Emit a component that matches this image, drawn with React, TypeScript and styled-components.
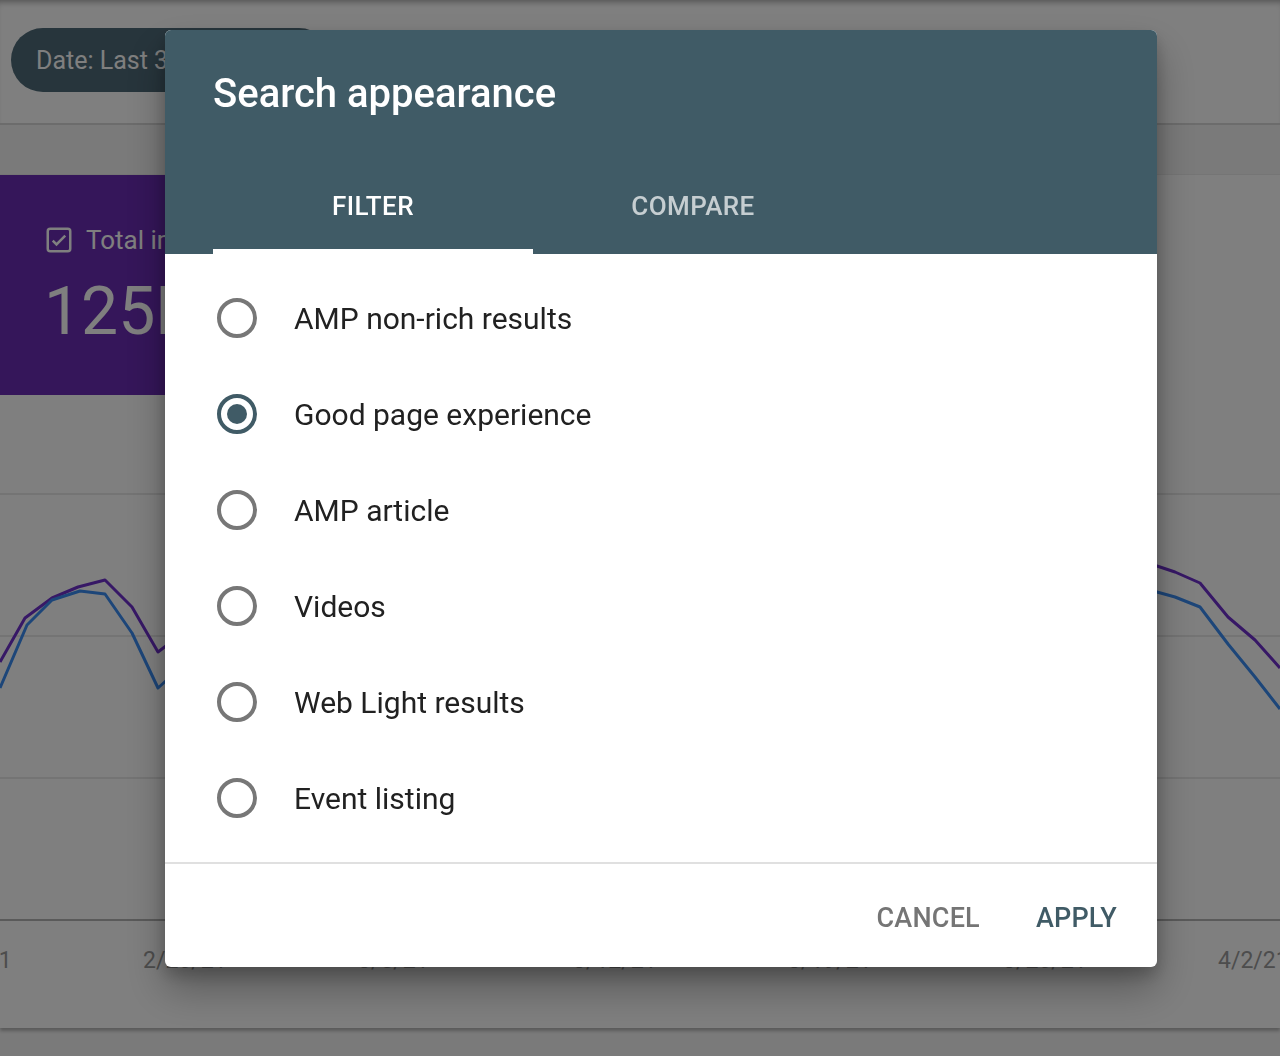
import React from "react";
import styled, { createGlobalStyle } from "styled-components";

const GlobalStyle = createGlobalStyle`
  html, body {
    margin: 0;
    padding: 0;
    background: #ffffff;
    font-family: Roboto, "Noto Sans", "Liberation Sans", sans-serif;
    overflow: hidden;
  }
  * { box-sizing: border-box; }
`;

const options = [
  "AMP non-rich results",
  "Good page experience",
  "AMP article",
  "Videos",
  "Web Light results",
  "Event listing",
];

const xLabels = ["2/19/21", "2/26/21", "3/5/21", "3/12/21", "3/19/21", "3/26/21", "4/2/21"];

// chart points use page y coordinates (viewBox starts where the chart area starts)
const purpleLine =
  "0,662 25,618 52,598 78,587 105,580 132,607 158,652 200,620 260,600 320,640 380,610 440,590 500,630 560,600 620,585 680,615 740,600 800,580 860,610 920,590 980,575 1040,600 1100,580 1157,566 1175,572 1200,583 1228,617 1255,640 1280,668";
const blueLine =
  "0,688 27,625 52,600 80,591 105,594 132,633 158,688 200,650 260,625 320,665 380,640 440,620 500,655 560,630 620,612 680,640 740,628 800,606 860,636 920,615 980,600 1040,626 1100,606 1157,592 1175,597 1200,607 1228,644 1255,677 1280,709";

export default function App() {
  const [selected, setSelected] = React.useState(1);

  return (
    <>
      <GlobalStyle />
      <Page>
        <TopBar>
          <DateChip>Date: Last 3 months</DateChip>
        </TopBar>
        <Spacer />
        <ChartCard>
          <MetricTile>
            <MetricLabel>
              <CheckIcon viewBox="0 0 24 24">
                <rect x="3" y="3" width="18" height="18" rx="2" fill="none" stroke="currentColor" strokeWidth="2" />
                <path d="M7 12.5l3 3 7-7" fill="none" stroke="currentColor" strokeWidth="2" />
              </CheckIcon>
              Total impressions
            </MetricLabel>
            <MetricValue>125M</MetricValue>
          </MetricTile>
          <ChartArea>
            <GridLine />
            <GridLine />
            <GridLine />
            <AxisLine />
            <LinesSvg viewBox="0 395 1280 526" preserveAspectRatio="none">
              <polyline points={purpleLine} fill="none" stroke="#6e30cc" strokeWidth="3" strokeLinejoin="round" />
              <polyline points={blueLine} fill="none" stroke="#3a8cf2" strokeWidth="3" strokeLinejoin="round" />
            </LinesSvg>
          </ChartArea>
          <AxisLabels>
            {xLabels.map((l) => (
              <AxisLabel key={l}>{l}</AxisLabel>
            ))}
          </AxisLabels>
        </ChartCard>
      </Page>

      <Scrim />

      <Dialog role="dialog" aria-label="Search appearance">
        <DialogHeader>
          <DialogTitle>Search appearance</DialogTitle>
          <Tabs>
            <Tab $active>FILTER</Tab>
            <Tab>COMPARE</Tab>
          </Tabs>
        </DialogHeader>
        <OptionList>
          {options.map((o, i) => (
            <OptionRow key={o} onClick={() => setSelected(i)}>
              <Radio $checked={selected === i} />
              <OptionText>{o}</OptionText>
            </OptionRow>
          ))}
        </OptionList>
        <Footer>
          <TextButton $tone="muted">CANCEL</TextButton>
          <TextButton $tone="primary">APPLY</TextButton>
        </Footer>
      </Dialog>
    </>
  );
}

const Page = styled.div`
  width: 1280px;
  height: 1056px;
  display: flex;
  flex-direction: column;
  background: #f4f4f4;
`;

const TopBar = styled.div`
  height: 125px;
  background: #ffffff;
  border-bottom: 2px solid #d8d8d8;
  padding: 28px 0 0 11px;
  box-shadow: inset 0 6px 6px -4px rgba(0, 0, 0, 0.35);
`;

const DateChip = styled.div`
  width: 320px;
  height: 64px;
  border-radius: 32px;
  background: #4e6a78;
  color: #ffffff;
  font-size: 25px;
  display: flex;
  align-items: center;
  padding-left: 25px;
`;

const Spacer = styled.div`
  height: 50px;
  border-bottom: 1px solid #ebebeb;
`;

const ChartCard = styled.div`
  height: 853px;
  background: #ffffff;
  display: flex;
  flex-direction: column;
  box-shadow: 0 3px 3px rgba(0, 0, 0, 0.25);
`;

const MetricTile = styled.div`
  width: 300px;
  height: 220px;
  background: #6a2cb4;
  color: #ffffff;
  padding: 50px 0 0 44px;
`;

const MetricLabel = styled.div`
  display: flex;
  align-items: center;
  gap: 12px;
  font-size: 26px;
`;

const CheckIcon = styled.svg`
  width: 30px;
  height: 30px;
  color: #ffffff;
`;

const MetricValue = styled.div`
  font-size: 66px;
  margin-top: 24px;
  line-height: 1;
`;

const ChartArea = styled.div`
  position: relative;
  height: 526px;
  display: flex;
  flex-direction: column;
  justify-content: flex-end;
  gap: 140px;
`;

const GridLine = styled.div`
  height: 2px;
  background: #e8e8e8;
`;

const AxisLine = styled.div`
  height: 2px;
  background: #b4b4b4;
`;

const LinesSvg = styled.svg`
  position: absolute;
  left: 0;
  top: 0;
  width: 1280px;
  height: 526px;
`;

const AxisLabels = styled.div`
  display: flex;
  margin: 26px 0 0 -72px;
`;

const AxisLabel = styled.span`
  flex: 0 0 215px;
  font-size: 23px;
  color: #9a9a9a;
  white-space: nowrap;
`;

const Scrim = styled.div`
  position: fixed;
  inset: 0;
  background: rgba(0, 0, 0, 0.5);
`;

const Dialog = styled.div`
  position: fixed;
  left: 165px;
  top: 30px;
  width: 992px;
  height: 937px;
  background: #ffffff;
  border-radius: 6px;
  overflow: hidden;
  display: flex;
  flex-direction: column;
  box-shadow: 0 22px 40px rgba(0, 0, 0, 0.3), 0 8px 16px rgba(0, 0, 0, 0.2);
`;

const DialogHeader = styled.div`
  background: #405b66;
  height: 224px;
  padding: 0 0 0 48px;
  display: flex;
  flex-direction: column;
`;

const DialogTitle = styled.h2`
  margin: 0;
  padding-top: 40px;
  height: 140px;
  color: #ffffff;
  font-size: 40px;
  font-weight: 500;
  line-height: 48px;
`;

const Tabs = styled.div`
  display: flex;
  flex: 1;
`;

const Tab = styled.div<{ $active?: boolean }>`
  width: 320px;
  display: flex;
  align-items: center;
  justify-content: center;
  padding-bottom: 8px;
  font-size: 26px;
  font-weight: 500;
  letter-spacing: 0.4px;
  color: ${(p) => (p.$active ? "#ffffff" : "rgba(255,255,255,0.7)")};
  border-bottom: 5px solid ${(p) => (p.$active ? "#ffffff" : "transparent")};
`;

const OptionList = styled.div`
  padding: 16px 0;
  border-bottom: 2px solid #e0e0e0;
`;

const OptionRow = styled.label`
  height: 96px;
  display: flex;
  align-items: center;
  padding-left: 52px;
  gap: 37px;
  cursor: pointer;
`;

const Radio = styled.span<{ $checked?: boolean }>`
  width: 40px;
  height: 40px;
  border-radius: 50%;
  border: 4px solid ${(p) => (p.$checked ? "#405b66" : "#777777")};
  display: flex;
  align-items: center;
  justify-content: center;
  &::after {
    content: "";
    width: 20px;
    height: 20px;
    border-radius: 50%;
    background: ${(p) => (p.$checked ? "#405b66" : "transparent")};
  }
`;

const OptionText = styled.span`
  font-size: 30px;
  color: #212121;
`;

const Footer = styled.div`
  flex: 1;
  display: flex;
  justify-content: flex-end;
  align-items: center;
  gap: 24px;
  padding: 4px 24px 0 0;
`;

const TextButton = styled.button<{ $tone: "muted" | "primary" }>`
  border: none;
  background: transparent;
  font-family: inherit;
  font-size: 27px;
  font-weight: 500;
  letter-spacing: 0.2px;
  padding: 8px 16px;
  color: ${(p) => (p.$tone === "primary" ? "#405b66" : "#757575")};
  cursor: pointer;
`;
